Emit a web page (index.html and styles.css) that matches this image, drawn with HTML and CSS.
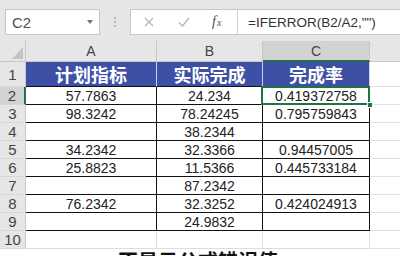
FILE: index.html
```html
<!DOCTYPE html>
<html lang="zh">
<head>
<meta charset="utf-8">
<link rel="stylesheet" href="styles.css">
</head>
<body>
<div class="toolbar">
  <div class="namebox"><span class="name">C2</span><span class="caret"></span></div>
  <div class="grip"><i></i><i></i><i></i></div>
  <div class="fbar">
    <div class="fbtns">
      <svg class="ico" width="10" height="10" viewBox="0 0 10 10"><path d="M1 1L9 9M9 1L1 9" stroke="#b4b4b4" stroke-width="1.2" fill="none"/></svg>
      <svg class="ico" width="12" height="10" viewBox="0 0 12 10"><path d="M1 5.5L4.5 9L11 1" stroke="#b4b4b4" stroke-width="1.2" fill="none"/></svg>
      <span class="fx"><i>f</i><i class="sx">x</i></span>
    </div>
    <div class="formula">=IFERROR(B2/A2,"")</div>
  </div>
</div>
<div class="sheet">
  <div class="corner"><svg width="11" height="12" viewBox="0 0 11 12"><path d="M11 0V12H0Z" fill="#c4c4c4"/></svg></div>
  <div class="ch">A</div><div class="ch">B</div><div class="ch sel">C</div><div class="ch last"></div>

  <div class="rh">1</div><div class="c hd">计划指标</div><div class="c hd">实际完成</div><div class="c hd">完成率</div><div class="d"></div>

  <div class="rh sel">2</div><div class="c">57.7863</div><div class="c">24.234</div><div class="c cur">0.419372758<span class="selbox"></span><span class="handle"></span></div><div class="d"></div>
  <div class="rh">3</div><div class="c">98.3242</div><div class="c">78.24245</div><div class="c">0.795759843</div><div class="d"></div>
  <div class="rh">4</div><div class="c"></div><div class="c">38.2344</div><div class="c"></div><div class="d"></div>
  <div class="rh">5</div><div class="c">34.2342</div><div class="c">32.3366</div><div class="c">0.94457005</div><div class="d"></div>
  <div class="rh">6</div><div class="c">25.8823</div><div class="c">11.5366</div><div class="c">0.445733184</div><div class="d"></div>
  <div class="rh">7</div><div class="c"></div><div class="c">87.2342</div><div class="c"></div><div class="d"></div>
  <div class="rh">8</div><div class="c">76.2342</div><div class="c">32.3252</div><div class="c">0.424024913</div><div class="d"></div>
  <div class="rh">9</div><div class="c"></div><div class="c">24.9832</div><div class="c"></div><div class="d"></div>
  <div class="rh">10</div><div class="g"></div><div class="g"></div><div class="g"></div><div class="d"></div>
</div>
<div class="caption">不显示公式错误值</div>
</body>
</html>
```

FILE: styles.css
```css
* { box-sizing: border-box; margin: 0; padding: 0; }
body {
  width: 400px;
  height: 256px;
  overflow: hidden;
  background: #fff;
  font-family: "Liberation Sans", Arial, "Noto Sans CJK SC", sans-serif;
  color: #222;
}
.toolbar {
  height: 41px;
  background: #e6e6e6;
  display: flex;
  align-items: flex-start;
  padding: 9px 0 0 5px;
}
.namebox {
  width: 95px;
  height: 26px;
  background: #fff;
  border: 1px solid #c8c8c8;
  display: flex;
  align-items: center;
  justify-content: space-between;
  padding: 0 6px 0 6px;
}
.name { font-size: 15px; color: #505050; }
.caret {
  width: 0; height: 0;
  border-left: 3px solid transparent;
  border-right: 3px solid transparent;
  border-top: 4px solid #707070;
}
.grip {
  width: 30px;
  height: 26px;
  display: flex;
  flex-direction: column;
  align-items: center;
  justify-content: center;
  gap: 2px;
}
.grip i { width: 2px; height: 2px; background: #a8a8a8; border-radius: 50%; }
.fbar {
  flex: 1;
  height: 26px;
  background: #fff;
  border: 1px solid #c8c8c8;
  border-right: none;
  display: flex;
}
.fbtns {
  width: 107px;
  display: flex;
  align-items: center;
  border-right: 1px solid #d4d4d4;
  padding-left: 13px;
}
.ico { display: block; }
.ico + .ico { margin-left: 24px; }
.fx {
  margin-left: 22px;
  font-family: "Liberation Serif", serif;
  font-size: 14px;
  color: #505050;
  display: flex;
  align-items: baseline;
}
.fx .sx { font-size: 10px; margin-left: 1px; }
.formula {
  display: flex;
  align-items: center;
  padding-left: 10px;
  font-size: 13.5px;
  color: #333;
  white-space: nowrap;
}
.sheet {
  display: grid;
  grid-template-columns: 26px 131px 106px 107px 1fr;
  grid-template-rows: 21px 25px repeat(9, 18px);
}
.sheet > div {
  display: flex;
  align-items: center;
  justify-content: center;
}
.corner {
  background: #e6e6e6;
  border-right: 1px solid #c8c8c8;
  border-bottom: 1px solid #c8c8c8;
  justify-content: flex-end !important;
  align-items: flex-end !important;
  padding: 0 2px 2px 0;
}
.ch {
  background: #e6e6e6;
  border-right: 1px solid #c8c8c8;
  border-bottom: 1px solid #c8c8c8;
  font-size: 14px;
  color: #444;
}
.ch.sel { background: #d3d3d3; border-bottom: 2px solid #217346; }
.ch.last { border-right: none; }
.rh {
  background: #e6e6e6;
  border-right: 1px solid #c8c8c8;
  border-bottom: 1px solid #d6d6d6;
  font-size: 15px;
  color: #444;
}
.rh.sel { background: #d3d3d3; border-right: 2px solid #217346; }
.c {
  border-right: 1px solid #111;
  border-bottom: 1px solid #111;
  font-size: 14px;
  color: #222;
}
.c.hd {
  background: #3d50a6;
  color: #fff;
  font-family: "Noto Sans CJK SC", sans-serif;
  font-weight: 700;
  font-size: 18px;
  border-right-color: #c9cde6;
}
.g {
  border-right: 1px solid #dcdcdc;
  border-bottom: 1px solid #dcdcdc;
}
.d { border-bottom: 1px solid #e2e2e2; }
.cur { position: relative; }
.selbox {
  position: absolute;
  top: -1px; left: -2px; right: -1px; bottom: -1px;
  border: 2px solid #217346;
}
.handle {
  position: absolute;
  right: -4px; bottom: -4px;
  width: 6px; height: 6px;
  background: #217346;
  border: 1px solid #fff;
}
.caption {
  margin-top: 2px;
  padding-left: 118px;
  font-family: "Noto Sans CJK SC", sans-serif;
  font-weight: 700;
  font-size: 20px;
  line-height: 20px;
  color: #111;
  white-space: nowrap;
}
```
